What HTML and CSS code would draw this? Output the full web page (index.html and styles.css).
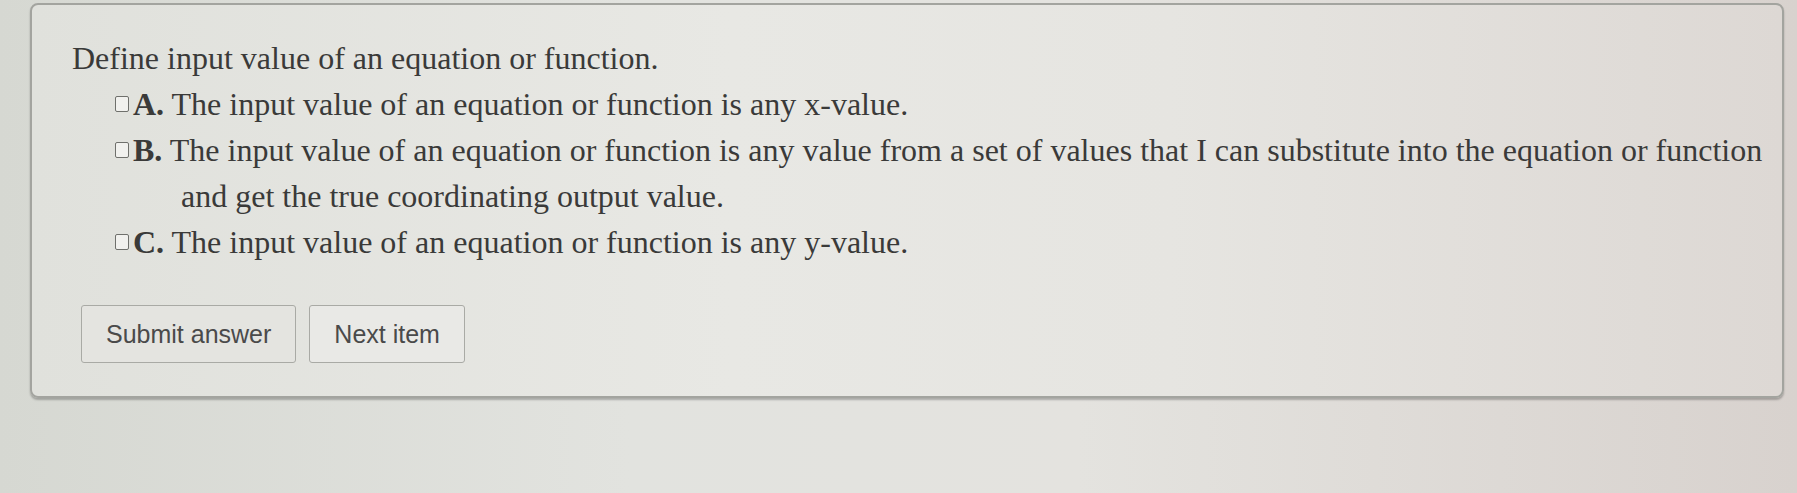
FILE: index.html
```html
<!DOCTYPE html>
<html lang="en">
<head>
    <meta charset="UTF-8">
    <meta name="viewport" content="width=device-width, initial-scale=1.0">
    <title>Practice Item</title>
    <link rel="stylesheet" href="styles.css">
</head>
<body>
    <main class="card">
        <p class="prompt">Define input value of an equation or function.</p>
        <ul class="choices">
            <li class="choice">
                <span class="box"></span>
                <span class="choice-text"><b>A.</b> The input value of an equation or function is any x-value.</span>
            </li>
            <li class="choice">
                <span class="box"></span>
                <span class="choice-text"><b>B.</b> The input value of an equation or function is any value from a set of values that I can substitute into the equation or function<br>and get the true coordinating output value.</span>
            </li>
            <li class="choice">
                <span class="box"></span>
                <span class="choice-text"><b>C.</b> The input value of an equation or function is any y-value.</span>
            </li>
        </ul>
        <div class="actions">
            <button type="button" class="btn">Submit answer</button>
            <button type="button" class="btn btn-next">Next item</button>
        </div>
    </main>
</body>
</html>
```

FILE: styles.css
```css
body {
    margin: 0;
    padding: 3px 13px 0 30px;
    min-height: 490px;
    background: linear-gradient(90deg, #d6d8d2 0%, #e2e3df 35%, #e4e3df 60%, #d8d2ce 100%);
    font-family: "Liberation Serif", "Times New Roman", serif;
    color: #3a3a39;
}
.card {
    box-sizing: border-box;
    height: 395px;
    padding: 30px 10px 30px 40px;
    border: 2px solid #a3a49f;
    border-radius: 8px;
    background: linear-gradient(90deg, #e0e1dc 0%, #e8e8e4 40%, #e6e5e1 65%, #ddd8d4 100%);
    box-shadow: 0 2px 2px rgba(0, 0, 0, 0.25);
}
.prompt {
    margin: 0;
    font-size: 32px;
    line-height: 46px;
}
.choices {
    list-style: none;
    margin: 0;
    padding: 0 0 0 43px;
}
.choice {
    display: flex;
    align-items: flex-start;
    font-size: 32px;
    line-height: 46px;
}
.box {
    flex: none;
    box-sizing: border-box;
    width: 14px;
    height: 16px;
    margin: 15px 4px 0 0;
    border: 1.5px solid #6f706c;
    border-radius: 2px;
    background: #f1f1ee;
}
.choice-text {
    padding-left: 48px;
    text-indent: -48px;
    white-space: nowrap;
}
.choice-text b {
    font-weight: bold;
}
.actions {
    display: flex;
    gap: 13px;
    margin: 40px 0 0 9px;
}
.btn {
    height: 58px;
    padding: 0 24px;
    font-family: "Liberation Sans", Arial, sans-serif;
    font-size: 25px;
    color: #4a4a4a;
    background: #e4e4e0;
    border: 1.5px solid #a9aaa5;
    border-radius: 3px;
    cursor: pointer;
}
.btn-next {
    background: #e9e9e6;
}
```
